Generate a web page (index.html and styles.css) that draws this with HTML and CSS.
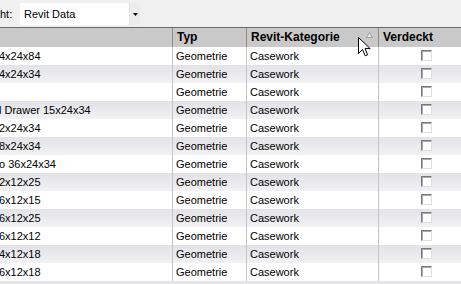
FILE: index.html
```html
<!DOCTYPE html>
<html>
<head>
    <title>Revit Data</title>
    <meta charset="UTF-8">
    <link rel="stylesheet" href="styles.css">
</head>
<body>
    <div class="toolbar">
        <span class="label">ht:</span>
        <div class="combo">
            <span class="combo-text">Revit Data</span>
            <span class="combo-btn">
                <svg width="5" height="3" viewBox="0 0 5 3"><path d="M0 0H5L2.5 3Z" fill="#000"/></svg>
            </span>
        </div>
    </div>

    <div class="grid">
        <div class="row head">
            <div class="cell c1"></div>
            <div class="cell c2">Typ</div>
            <div class="cell c3">Revit-Kategorie
                <svg class="sort" width="7" height="6" viewBox="0 0 7 6"><path d="M3.5 0.5L6.5 5.5H0.5Z" fill="#e4e4e4" stroke="#a0a0a0" stroke-width="1"/></svg>
            </div>
            <div class="cell c4">Verdeckt</div>
        </div>
        <div id="rows"></div>
        <div class="row alt"></div>
    </div>

    <!-- Mauszeiger über der Kopfzeile -->
    <svg class="cursor" width="13" height="20" viewBox="0 0 13 20">
        <path d="M0.5 0.5V16.5L4.5 12.5L7.2 18.8L9.6 17.8L7 11.6H12.2Z" fill="#fff" stroke="#000" stroke-width="1" stroke-linejoin="miter"/>
    </svg>

    <script>
        const items = [
            '4x24x84', '4x24x34', '', 'l Drawer 15x24x34', '2x24x34', '8x24x34',
            'o 36x24x34', '2x12x25', '6x12x15', '6x12x25', '6x12x12', '4x12x18',
            '6x12x18'
        ];
        document.getElementById('rows').innerHTML = items.map((name, i) => `
            <div class="row ${i % 2 ? 'alt' : ''}">
                <div class="cell c1 name">${name}</div>
                <div class="cell c2">Geometrie</div>
                <div class="cell c3">Casework</div>
                <div class="cell c4"><span class="check"></span></div>
            </div>
        `).join('');
    </script>
</body>
</html>
```

FILE: styles.css
```css
body {
    margin: 0;
    font-family: "Liberation Sans", Arial, sans-serif;
    font-size: 11px;
    color: #000;
    background-color: #fff;
    overflow: hidden;
}
.toolbar {
    height: 27px;
    background-color: #f0f0f0;
    display: flex;
    align-items: flex-start;
}
.label {
    width: 20px;
    line-height: 28px;
}
.combo {
    margin-top: 3px;
    width: 120px;
    height: 22px;
    background-color: #fff;
    display: flex;
}
.combo-text {
    flex: 1;
    padding-left: 4px;
    line-height: 22px;
}
.combo-btn {
    width: 11px;
    background-color: #ececec;
    border-left: 1px solid #e2e2e2;
    display: flex;
    justify-content: center;
    padding-top: 10px;
    box-sizing: border-box;
}
.combo-btn svg {
    display: block;
}
.grid {
    border-top: 1px solid #6a6a6a;
}
.row {
    display: flex;
    height: 18px;
    line-height: 18px;
}
.row.alt {
    background: linear-gradient(#e2e2e7, #f2f2f4);
}
.cell {
    border-right: 1px solid #c4c4c4;
    padding-left: 3px;
    white-space: nowrap;
    overflow: hidden;
    box-sizing: border-box;
}
.c1 { width: 173px; }
.c2 { width: 74px; }
.c3 { width: 132px; }
.c4 { flex: 1; border-right: none; padding-left: 42px; }
.name {
    padding-left: 0;
    text-indent: -1px;
}
.row.head {
    height: 19px;
    line-height: 19px;
    background-color: #c9c9c9;
    font-weight: bold;
    font-size: 12px;
}
.head .cell {
    border-right: 1px solid #8a8a8a;
    padding-left: 4px;
    position: relative;
}
.head .c4 {
    border-right: none;
}
.sort {
    position: absolute;
    left: 119px;
    top: 4px;
}
.check {
    display: inline-block;
    width: 11px;
    height: 11px;
    margin-top: 3px;
    vertical-align: top;
    box-sizing: border-box;
    background-color: #fff;
    border: 1px solid;
    border-color: #777 #dedede #dedede #777;
    box-shadow: inset 1px 1px 0 #aaa;
}
.cursor {
    position: absolute;
    left: 358px;
    top: 37px;
}
```
